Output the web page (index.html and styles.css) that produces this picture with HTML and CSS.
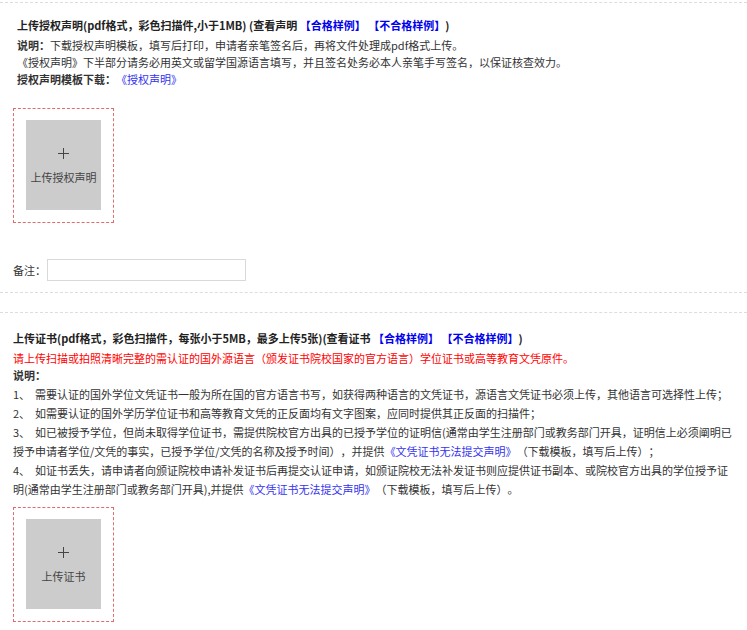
FILE: index.html
```html
<!DOCTYPE html>
<html lang="zh-CN">
<head>
    <meta charset="UTF-8">
    <title>上传材料</title>
    <link rel="stylesheet" href="styles.css">
</head>
<body>
    <div class="divider first"></div>

    <div class="section auth">
        <p class="title">上传授权声明(pdf格式，彩色扫描件,小于1MB) (查看声明 <a class="sample" href="#">【合格样例】</a> <a class="sample" href="#">【不合格样例】</a>)</p>
        <p><b>说明：</b>下载授权声明模板，填写后打印，申请者亲笔签名后，再将文件处理成pdf格式上传。</p>
        <p>《授权声明》下半部分请务必用英文或留学国源语言填写，并且签名处务必本人亲笔手写签名，以保证核查效力。</p>
        <p><b>授权声明模板下载：</b><a class="doc" href="#">《授权声明》</a></p>
    </div>

    <div class="upload">
        <div class="upload-inner">
            <span class="plus"></span>
            <span class="upload-label">上传授权声明</span>
        </div>
    </div>

    <div class="remark">
        <label for="remark">备注：</label>
        <input type="text" id="remark">
    </div>

    <div class="divider"></div>
    <div class="divider second"></div>

    <div class="section cert">
        <p class="title">上传证书(pdf格式，彩色扫描件，每张小于5MB，最多上传5张)(查看证书 <a class="sample" href="#">【合格样例】</a> <a class="sample" href="#">【不合格样例】</a>)</p>
        <p class="warn">请上传扫描或拍照清晰完整的需认证的国外源语言（颁发证书院校国家的官方语言）学位证书或高等教育文凭原件。</p>
        <p><b>说明：</b></p>
        <ul class="notes">
            <li>1、&nbsp; 需要认证的国外学位文凭证书一般为所在国的官方语言书写，如获得两种语言的文凭证书，源语言文凭证书必须上传，其他语言可选择性上传；</li>
            <li>2、&nbsp; 如需要认证的国外学历学位证书和高等教育文凭的正反面均有文字图案，应同时提供其正反面的扫描件；</li>
            <li>3、&nbsp; 如已被授予学位，但尚未取得学位证书，需提供院校官方出具的已授予学位的证明信(通常由学生注册部门或教务部门开具，证明信上必须阐明已授予申请者学位/文凭的事实，已授予学位/文凭的名称及授予时间），并提供<a class="doc" href="#">《文凭证书无法提交声明》</a>（下载模板，填写后上传）；</li>
            <li>4、&nbsp; 如证书丢失，请申请者向颁证院校申请补发证书后再提交认证申请，如颁证院校无法补发证书则应提供证书副本、或院校官方出具的学位授予证明(通常由学生注册部门或教务部门开具),并提供<a class="doc" href="#">《文凭证书无法提交声明》</a>（下载模板，填写后上传）。</li>
        </ul>
    </div>

    <div class="upload cert-upload">
        <div class="upload-inner">
            <span class="plus"></span>
            <span class="upload-label">上传证书</span>
        </div>
    </div>
</body>
</html>
```

FILE: styles.css
```css
body {
    margin: 0;
    font-family: "Noto Sans CJK SC", "Microsoft YaHei", sans-serif;
    font-size: 11px;
    color: #333;
    background: #fff;
    text-spacing-trim: space-all;
}

p {
    margin: 0;
}

a {
    text-decoration: none;
}

.divider {
    border-top: 1px dashed #ddd;
}

.divider.first {
    margin-top: 2px;
}

.divider.second {
    margin-top: 19px;
}

.section {
    line-height: 17px;
}

.section.auth {
    padding: 14px 0 0 17px;
}

.section .title {
    font-weight: bold;
    color: #222;
    margin-bottom: 3px;
}

.sample {
    color: #0000ee;
    font-weight: bold;
}

.doc {
    color: #3333ee;
}

.upload {
    width: 75px;
    margin: 20px 0 0 13px;
    padding: 11px 12px 12px;
    border: 1px dashed #e06c6c;
}

.upload-inner {
    height: 90px;
    background: #ccc;
    display: flex;
    flex-direction: column;
    align-items: center;
    color: #444;
}

.plus {
    position: relative;
    width: 11px;
    height: 11px;
    margin-top: 28px;
}

.plus::before,
.plus::after {
    content: "";
    position: absolute;
    background: #444;
}

.plus::before {
    left: 0;
    top: 5px;
    width: 11px;
    height: 1px;
}

.plus::after {
    left: 5px;
    top: 0;
    width: 1px;
    height: 11px;
}

.upload-label {
    margin-top: 10px;
    font-size: 11px;
    color: #444;
}

.remark {
    display: flex;
    align-items: center;
    margin: 36px 0 0 13px;
}

.remark label {
    color: #333;
}

.remark input {
    width: 195px;
    height: 18px;
    margin: 0 0 0 1px;
    padding: 1px;
    border: 1px solid #d9d9d9;
    outline: none;
}

.remark + .divider {
    margin-top: 11px;
}

.section.cert {
    padding: 17px 0 0 13px;
    width: 720px;
}

.warn {
    color: #ff0000;
}

.notes {
    list-style: none;
    margin: 1px 0 0;
    padding: 0;
    line-height: 19px;
}

.cert-upload {
    margin-top: 8px;
}
```
